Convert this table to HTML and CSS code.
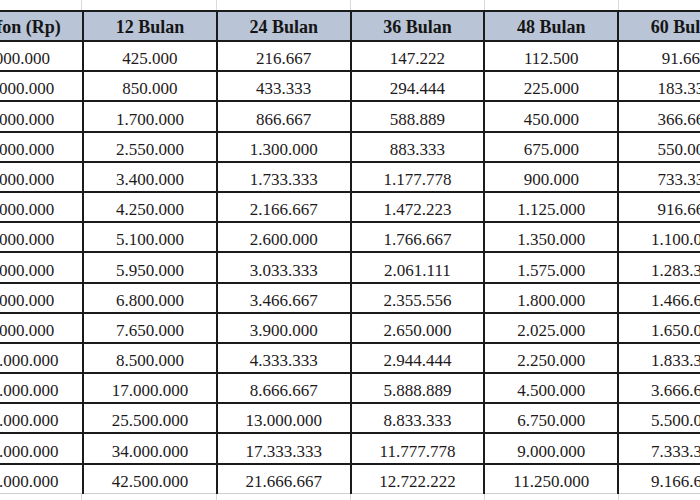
FILE: index.html
```html
<!DOCTYPE html>
<html lang="id">
<head>
<meta charset="utf-8">
<title>Tabel Angsuran</title>
<link rel="stylesheet" href="styles.css">
</head>
<body>
<div class="sheet">
<table class="grid">
<colgroup><col><col><col><col><col><col></colgroup>
<thead>
<tr><th>Plafon (Rp)</th><th>12 Bulan</th><th>24 Bulan</th><th>36 Bulan</th><th>48 Bulan</th><th>60 Bulan</th></tr>
</thead>
<tbody>
<tr><td>5.000.000</td><td>425.000</td><td>216.667</td><td>147.222</td><td>112.500</td><td>91.667</td></tr>
<tr><td>10.000.000</td><td>850.000</td><td>433.333</td><td>294.444</td><td>225.000</td><td>183.333</td></tr>
<tr><td>20.000.000</td><td>1.700.000</td><td>866.667</td><td>588.889</td><td>450.000</td><td>366.667</td></tr>
<tr><td>30.000.000</td><td>2.550.000</td><td>1.300.000</td><td>883.333</td><td>675.000</td><td>550.000</td></tr>
<tr><td>40.000.000</td><td>3.400.000</td><td>1.733.333</td><td>1.177.778</td><td>900.000</td><td>733.333</td></tr>
<tr><td>50.000.000</td><td>4.250.000</td><td>2.166.667</td><td>1.472.223</td><td>1.125.000</td><td>916.667</td></tr>
<tr><td>60.000.000</td><td>5.100.000</td><td>2.600.000</td><td>1.766.667</td><td>1.350.000</td><td>1.100.000</td></tr>
<tr><td>70.000.000</td><td>5.950.000</td><td>3.033.333</td><td>2.061.111</td><td>1.575.000</td><td>1.283.333</td></tr>
<tr><td>80.000.000</td><td>6.800.000</td><td>3.466.667</td><td>2.355.556</td><td>1.800.000</td><td>1.466.667</td></tr>
<tr><td>90.000.000</td><td>7.650.000</td><td>3.900.000</td><td>2.650.000</td><td>2.025.000</td><td>1.650.000</td></tr>
<tr><td>100.000.000</td><td>8.500.000</td><td>4.333.333</td><td>2.944.444</td><td>2.250.000</td><td>1.833.333</td></tr>
<tr><td>200.000.000</td><td>17.000.000</td><td>8.666.667</td><td>5.888.889</td><td>4.500.000</td><td>3.666.667</td></tr>
<tr><td>300.000.000</td><td>25.500.000</td><td>13.000.000</td><td>8.833.333</td><td>6.750.000</td><td>5.500.000</td></tr>
<tr><td>400.000.000</td><td>34.000.000</td><td>17.333.333</td><td>11.777.778</td><td>9.000.000</td><td>7.333.333</td></tr>
<tr class="last"><td>500.000.000</td><td>42.500.000</td><td>21.666.667</td><td>12.722.222</td><td>11.250.000</td><td>9.166.667</td></tr>
</tbody>
</table>
</div>
</body>
</html>
```

FILE: styles.css
```css
html, body {
  margin: 0;
  padding: 0;
  background: #ffffff;
}

body {
  width: 700px;
  height: 500px;
  overflow: hidden;
}

.sheet {
  margin-left: -51.8px;
  width: 802.8px;
  height: 500px;
  padding-top: 10px;
  box-sizing: border-box;
  background: repeating-linear-gradient(to right, transparent 0, transparent 133.3px, #d9d9d9 133.3px, #d9d9d9 134.3px);
}

.grid {
  border-collapse: collapse;
  table-layout: fixed;
  width: 802.8px;
  font-family: "Liberation Serif", "Times New Roman", serif;
  color: #1e1a1c;
}

.grid col {
  width: 133.8px;
}

.grid th,
.grid td {
  border: 2px solid #1b1b1b;
  text-align: center;
  vertical-align: bottom;
  white-space: nowrap;
  overflow: hidden;
  padding: 0 2px 1px;
}

.grid th {
  height: 26px;
  background: #b9c4d6;
  font-size: 18px;
  font-weight: bold;
  line-height: 21px;
  padding-bottom: 2px;
  color: #151515;
}

.grid td {
  height: 27.2px;
  background: #ffffff;
  font-size: 17px;
  line-height: 20px;
}

.grid tr.last td {
  border-bottom: 1px solid #cfcfcf;
}
```
